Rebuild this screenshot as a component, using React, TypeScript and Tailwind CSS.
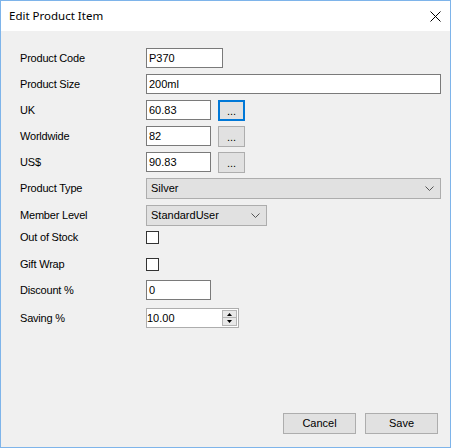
import React from "react"

const FONT = { fontFamily: '"Liberation Sans", Arial, sans-serif' }

function Row({
  label,
  mt,
  h,
  children,
}: {
  label: string
  mt: string
  h: string
  children: React.ReactNode
}) {
  return (
    <div className={`flex items-center ${mt} ${h}`}>
      <div className="w-[126px] shrink-0 text-[11px] leading-[13px] tracking-[-0.2px] text-black">{label}</div>
      <div className="flex h-full items-start gap-[7px]">{children}</div>
    </div>
  )
}

function TextBox({ w, children }: { w: string; children: React.ReactNode }) {
  return (
    <div
      className={`${w} flex h-[20px] items-center border border-[#7a7a7a] bg-white pl-[2px] text-[11px] text-black`}
    >
      {children}
    </div>
  )
}

function DotsButton({ focused }: { focused?: boolean }) {
  return (
    <div
      className={`flex h-[21px] w-[27px] items-center justify-center bg-[#e1e1e1] text-[11px] leading-none text-black ${
        focused ? "border-2 border-[#0078d7]" : "border border-[#adadad]"
      }`}
    >
      <span className="mt-[2px]">...</span>
    </div>
  )
}

function Chevron() {
  return (
    <svg width="9" height="5" viewBox="0 0 9 5" className="shrink-0">
      <path d="M0.5 0.5 L4.5 4.5 L8.5 0.5" fill="none" stroke="#555" strokeWidth="1" />
    </svg>
  )
}

function Combo({ w, value }: { w: string; value: string }) {
  return (
    <div
      className={`${w} flex h-[21px] items-center justify-between border border-[#adadad] bg-[#e1e1e1] pl-[4px] pr-[6px] text-[11px] text-black`}
    >
      <span>{value}</span>
      <Chevron />
    </div>
  )
}

function CheckBox() {
  return <div className="h-[13px] w-[13px] border border-[#333333] bg-white" />
}

function Spinner() {
  return (
    <div className="my-[1px] mr-[1px] flex w-[15px] flex-col">
      <div className="flex h-[8px] items-center justify-center border border-[#b5b5b5] bg-[#e8e8e8]">
        <svg width="5" height="3" viewBox="0 0 5 3">
          <path d="M2.5 0 L5 3 L0 3 Z" fill="#000" />
        </svg>
      </div>
      <div className="flex h-[8px] items-center justify-center border border-t-0 border-[#b5b5b5] bg-[#e8e8e8]">
        <svg width="5" height="3" viewBox="0 0 5 3">
          <path d="M0 0 L5 0 L2.5 3 Z" fill="#000" />
        </svg>
      </div>
    </div>
  )
}

export default function App() {
  return (
    <div
      className="flex h-[448px] w-[451px] flex-col border border-[#7eb4ea] bg-[#f0f0f0]"
      style={FONT}
    >
      {/* title bar */}
      <div className="flex h-[30px] shrink-0 items-center justify-between bg-white pl-[8px] pr-[9px]">
        <span
          className="text-[11.5px] text-black"
          style={{ fontFamily: '"Noto Sans", "Liberation Sans", sans-serif' }}
        >
          Edit Product Item
        </span>
        <svg width="11" height="11" viewBox="0 0 11 11" className="mt-[1px]">
          <path d="M0.5 0.5 L10.5 10.5 M10.5 0.5 L0.5 10.5" stroke="#000" strokeWidth="1" />
        </svg>
      </div>

      {/* form */}
      <div className="flex flex-1 flex-col pl-[19px] pt-[17px]">
        <Row label="Product Code" mt="mt-0" h="h-[20px]">
          <TextBox w="w-[77px]">P370</TextBox>
        </Row>
        <Row label="Product Size" mt="mt-[6px]" h="h-[20px]">
          <TextBox w="w-[295px]">200ml</TextBox>
        </Row>
        <Row label="UK" mt="mt-[6px]" h="h-[21px]">
          <TextBox w="w-[65px]">60.83</TextBox>
          <DotsButton focused />
        </Row>
        <Row label="Worldwide" mt="mt-[5px]" h="h-[21px]">
          <TextBox w="w-[65px]">82</TextBox>
          <DotsButton />
        </Row>
        <Row label="US$" mt="mt-[5px]" h="h-[21px]">
          <TextBox w="w-[65px]">90.83</TextBox>
          <DotsButton />
        </Row>
        <Row label="Product Type" mt="mt-[5px]" h="h-[21px]">
          <Combo w="w-[295px]" value="Silver" />
        </Row>
        <Row label="Member Level" mt="mt-[6px]" h="h-[21px]">
          <Combo w="w-[121px]" value="StandardUser" />
        </Row>
        <Row label="Out of Stock" mt="mt-[5px]" h="h-[13px]">
          <CheckBox />
        </Row>
        <Row label="Gift Wrap" mt="mt-[14px]" h="h-[13px]">
          <CheckBox />
        </Row>
        <Row label="Discount %" mt="mt-[9px]" h="h-[20px]">
          <TextBox w="w-[65px]">0</TextBox>
        </Row>
        <Row label="Saving %" mt="mt-[8px]" h="h-[20px]">
          <div className="flex h-[20px] w-[93px] border border-[#adadad] bg-white text-[11px] text-black">
            <div className="flex flex-1 items-center">10.00</div>
            <Spinner />
          </div>
        </Row>

        {/* footer buttons */}
        <div className="mt-auto flex justify-end gap-[9px] pb-[13px] pr-[12px]">
          <div className="flex h-[21px] w-[73px] items-center justify-center border border-[#adadad] bg-[#e1e1e1] text-[11px] text-black">
            Cancel
          </div>
          <div className="flex h-[21px] w-[73px] items-center justify-center border border-[#adadad] bg-[#e1e1e1] text-[11px] text-black">
            Save
          </div>
        </div>
      </div>
    </div>
  )
}
